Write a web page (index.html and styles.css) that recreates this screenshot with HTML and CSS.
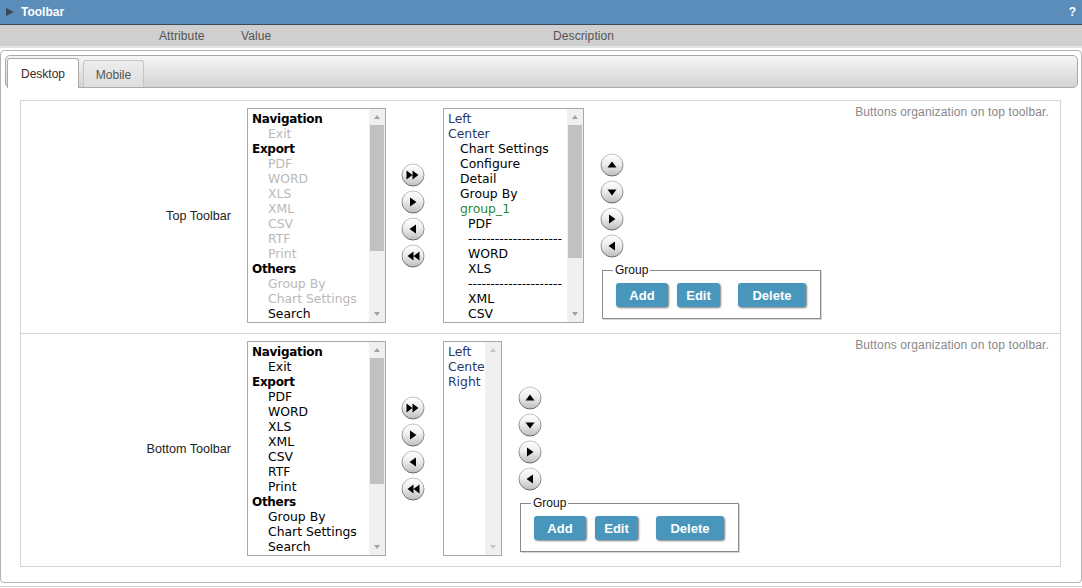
FILE: index.html
```html
<!DOCTYPE html>
<html>
<head>
<meta charset="utf-8">
<link rel="stylesheet" href="styles.css">
</head>
<body>
<svg class="defs" width="0" height="0" aria-hidden="true">
  <defs>
    <linearGradient id="bf" x1="0" y1="0" x2="0" y2="1">
      <stop offset="0" stop-color="#ffffff"/>
      <stop offset="0.45" stop-color="#eeeeee"/>
      <stop offset="1" stop-color="#bdbdbd"/>
    </linearGradient>
    <linearGradient id="bs" x1="0" y1="0" x2="0" y2="1">
      <stop offset="0" stop-color="#c4c4c4"/>
      <stop offset="1" stop-color="#666666"/>
    </linearGradient>
  </defs>
</svg>

<div class="header">
  <span class="caret"></span>
  <span class="title">Toolbar</span>
  <span class="help">?</span>
</div>
<div class="colbar">
  <span class="c-attr">Attribute</span>
  <span class="c-val">Value</span>
  <span class="c-desc">Description</span>
</div>

<div class="panel">
  <div class="tabbar">
    <div class="tab active">Desktop</div>
    <div class="tab">Mobile</div>
  </div>

  <div class="grid">
    <!-- Top toolbar -->
    <div class="row">
      <div class="label">Top Toolbar</div>
      <div class="controls">
        <div class="listbox lb-left">
          <div class="items">
            <div class="grp">Navigation</div>
            <div class="it dis">Exit</div>
            <div class="grp">Export</div>
            <div class="it dis">PDF</div>
            <div class="it dis">WORD</div>
            <div class="it dis">XLS</div>
            <div class="it dis">XML</div>
            <div class="it dis">CSV</div>
            <div class="it dis">RTF</div>
            <div class="it dis">Print</div>
            <div class="grp">Others</div>
            <div class="it dis">Group By</div>
            <div class="it dis">Chart Settings</div>
            <div class="it">Search</div>
          </div>
          <div class="sb"><div class="sb-btn"><span class="tri-up"></span></div><div class="sb-track"><div class="thumb t1"></div></div><div class="sb-btn"><span class="tri-down"></span></div></div>
        </div>

        <div class="arrows">
          <svg class="ab" viewBox="0 0 24 24"><circle cx="12" cy="12" r="11" fill="url(#bf)" stroke="url(#bs)"/><path d="M5.5 7.5l6 4.5-6 4.5zM11.5 7.5l6 4.5-6 4.5z"/></svg>
          <svg class="ab" viewBox="0 0 24 24"><circle cx="12" cy="12" r="11" fill="url(#bf)" stroke="url(#bs)"/><path d="M9 7.5l6.5 4.5-6.5 4.5z"/></svg>
          <svg class="ab" viewBox="0 0 24 24"><circle cx="12" cy="12" r="11" fill="url(#bf)" stroke="url(#bs)"/><path d="M15 7.5l-6.5 4.5 6.5 4.5z"/></svg>
          <svg class="ab" viewBox="0 0 24 24"><circle cx="12" cy="12" r="11" fill="url(#bf)" stroke="url(#bs)"/><path d="M12.5 7.5l-6 4.5 6 4.5zM18.5 7.5l-6 4.5 6 4.5z"/></svg>
        </div>

        <div class="listbox lb-right">
          <div class="items">
            <div class="pos">Left</div>
            <div class="pos">Center</div>
            <div class="l1">Chart Settings</div>
            <div class="l1">Configure</div>
            <div class="l1">Detail</div>
            <div class="l1">Group By</div>
            <div class="l1 green">group_1</div>
            <div class="l2">PDF</div>
            <div class="l2">---------------------</div>
            <div class="l2">WORD</div>
            <div class="l2">XLS</div>
            <div class="l2">---------------------</div>
            <div class="l2">XML</div>
            <div class="l2">CSV</div>
          </div>
          <div class="sb"><div class="sb-btn"><span class="tri-up"></span></div><div class="sb-track"><div class="thumb t2"></div></div><div class="sb-btn"><span class="tri-down"></span></div></div>
        </div>

        <div class="col2">
          <div class="arrows2">
            <svg class="ab" viewBox="0 0 24 24"><circle cx="12" cy="12" r="11" fill="url(#bf)" stroke="url(#bs)"/><path d="M7.5 14.5l4.5-6 4.5 6z"/></svg>
            <svg class="ab" viewBox="0 0 24 24"><circle cx="12" cy="12" r="11" fill="url(#bf)" stroke="url(#bs)"/><path d="M7.5 9.5l4.5 6 4.5-6z"/></svg>
            <svg class="ab" viewBox="0 0 24 24"><circle cx="12" cy="12" r="11" fill="url(#bf)" stroke="url(#bs)"/><path d="M9 7.5l6.5 4.5-6.5 4.5z"/></svg>
            <svg class="ab" viewBox="0 0 24 24"><circle cx="12" cy="12" r="11" fill="url(#bf)" stroke="url(#bs)"/><path d="M15 7.5l-6.5 4.5 6.5 4.5z"/></svg>
          </div>
          <fieldset class="group">
            <legend>Group</legend>
            <button class="btn b-add">Add</button><button class="btn b-edit">Edit</button><button class="btn b-del">Delete</button>
          </fieldset>
        </div>
      </div>
      <div class="desc">Buttons organization on top toolbar.</div>
    </div>

    <!-- Bottom toolbar -->
    <div class="row">
      <div class="label">Bottom Toolbar</div>
      <div class="controls">
        <div class="listbox lb-left">
          <div class="items">
            <div class="grp">Navigation</div>
            <div class="it">Exit</div>
            <div class="grp">Export</div>
            <div class="it">PDF</div>
            <div class="it">WORD</div>
            <div class="it">XLS</div>
            <div class="it">XML</div>
            <div class="it">CSV</div>
            <div class="it">RTF</div>
            <div class="it">Print</div>
            <div class="grp">Others</div>
            <div class="it">Group By</div>
            <div class="it">Chart Settings</div>
            <div class="it">Search</div>
          </div>
          <div class="sb"><div class="sb-btn"><span class="tri-up"></span></div><div class="sb-track"><div class="thumb t1"></div></div><div class="sb-btn"><span class="tri-down"></span></div></div>
        </div>

        <div class="arrows">
          <svg class="ab" viewBox="0 0 24 24"><circle cx="12" cy="12" r="11" fill="url(#bf)" stroke="url(#bs)"/><path d="M5.5 7.5l6 4.5-6 4.5zM11.5 7.5l6 4.5-6 4.5z"/></svg>
          <svg class="ab" viewBox="0 0 24 24"><circle cx="12" cy="12" r="11" fill="url(#bf)" stroke="url(#bs)"/><path d="M9 7.5l6.5 4.5-6.5 4.5z"/></svg>
          <svg class="ab" viewBox="0 0 24 24"><circle cx="12" cy="12" r="11" fill="url(#bf)" stroke="url(#bs)"/><path d="M15 7.5l-6.5 4.5 6.5 4.5z"/></svg>
          <svg class="ab" viewBox="0 0 24 24"><circle cx="12" cy="12" r="11" fill="url(#bf)" stroke="url(#bs)"/><path d="M12.5 7.5l-6 4.5 6 4.5zM18.5 7.5l-6 4.5 6 4.5z"/></svg>
        </div>

        <div class="listbox lb-small">
          <div class="items">
            <div class="pos">Left</div>
            <div class="pos">Center</div>
            <div class="pos">Right</div>
          </div>
          <div class="sb sb-off"><div class="sb-btn"><span class="tri-up"></span></div><div class="sb-track"></div><div class="sb-btn"><span class="tri-down"></span></div></div>
        </div>

        <div class="col2">
          <div class="arrows2">
            <svg class="ab" viewBox="0 0 24 24"><circle cx="12" cy="12" r="11" fill="url(#bf)" stroke="url(#bs)"/><path d="M7.5 14.5l4.5-6 4.5 6z"/></svg>
            <svg class="ab" viewBox="0 0 24 24"><circle cx="12" cy="12" r="11" fill="url(#bf)" stroke="url(#bs)"/><path d="M7.5 9.5l4.5 6 4.5-6z"/></svg>
            <svg class="ab" viewBox="0 0 24 24"><circle cx="12" cy="12" r="11" fill="url(#bf)" stroke="url(#bs)"/><path d="M9 7.5l6.5 4.5-6.5 4.5z"/></svg>
            <svg class="ab" viewBox="0 0 24 24"><circle cx="12" cy="12" r="11" fill="url(#bf)" stroke="url(#bs)"/><path d="M15 7.5l-6.5 4.5 6.5 4.5z"/></svg>
          </div>
          <fieldset class="group">
            <legend>Group</legend>
            <button class="btn b-add">Add</button><button class="btn b-edit">Edit</button><button class="btn b-del">Delete</button>
          </fieldset>
        </div>
      </div>
      <div class="desc">Buttons organization on top toolbar.</div>
    </div>
  </div>
</div>
<div class="next"></div>
</body>
</html>
```

FILE: styles.css
```css
* { box-sizing: border-box; }

html, body {
  margin: 0;
  padding: 0;
}

body {
  width: 1082px;
  height: 588px;
  overflow: hidden;
  background: #fff;
  font-family: "Liberation Sans", Arial, sans-serif;
  font-size: 12px;
  color: #222;
}

.defs { position: absolute; width: 0; height: 0; }

/* header */
.header {
  height: 25px;
  background: #5a8dba;
  border-bottom: 1px solid #3d4b57;
  display: flex;
  align-items: center;
  padding: 0 4px 0 6px;
  color: #fff;
  font-weight: bold;
  font-size: 12px;
}
.caret {
  width: 0;
  height: 0;
  border-left: 8px solid #3a4856;
  border-top: 4.5px solid transparent;
  border-bottom: 4.5px solid transparent;
  margin-right: 7px;
}
.title { flex: 1; }
.help { padding-right: 2px; }

.colbar {
  height: 23px;
  background: #cfcfcf;
  border-bottom: 2px solid #e3e3e3;
  display: flex;
  align-items: center;
  color: #555;
  font-size: 12px;
  letter-spacing: 0.1px;
}
.c-attr { margin-left: 159px; width: 82px; }
.c-val { width: 312px; }

/* panel */
.panel {
  margin-top: 2px;
  border: 1px solid #b3b3b3;
  border-radius: 4px;
  padding: 4px 3px 15px 4px;
}

.tabbar {
  height: 33px;
  border: 1px solid #aaa;
  border-radius: 5px;
  background: linear-gradient(#f6f6f6, #d4d4d4);
  display: flex;
  align-items: flex-end;
  padding-left: 1px;
}
.tab {
  height: 27px;
  width: 61px;
  margin-left: 4px;
  border: 1px solid #c6c6c6;
  border-bottom: 0;
  border-radius: 3px 3px 0 0;
  background: linear-gradient(#ededed, #dedede);
  color: #555;
  display: flex;
  align-items: center;
  justify-content: center;
  padding-top: 1px;
}
.tab.active {
  height: 30px;
  width: 72px;
  margin-left: 0;
  margin-bottom: -1px;
  border-color: #aaa;
  background: #fff;
  color: #3a2a2a;
  padding-top: 0;
}

.grid {
  margin: 12px 17px 0 15px;
  border: 1px solid #d3d3d3;
}
.row {
  height: 232px;
  display: flex;
  align-items: flex-start;
}
.row + .row { border-top: 1px solid #d3d3d3; height: 233px; }

.label {
  width: 210px;
  height: 215px;
  margin-top: 7px;
  margin-right: 16px;
  display: flex;
  align-items: center;
  justify-content: flex-end;
  color: #222;
  font-size: 12.6px;
}

.controls {
  margin-top: 7px;
  height: 215px;
  display: flex;
}

/* list boxes */
.listbox {
  height: 215px;
  border: 1px solid #a8a8a8;
  background: #fff;
  display: flex;
}
.lb-left { width: 139px; }
.lb-right { width: 141px; margin-left: 18px; }
.lb-small { width: 59px; margin-left: 18px; }

.items {
  flex: 1;
  overflow: hidden;
  padding: 2px 0 0 4px;
  font-family: "DejaVu Sans", Verdana, sans-serif;
  font-size: 12.4px;
  line-height: 15px;
  white-space: nowrap;
  color: #000;
}
.grp { font-weight: bold; font-size: 12px; letter-spacing: -0.3px; color: #000; padding-top: 1px; margin-bottom: -1px; }
.it { padding-left: 16px; }
.dis { color: #b9b9b9; }
.pos { color: #2a3a66; }
.l1 { padding-left: 12px; }
.l2 { padding-left: 20px; }
.green { color: #2e8a2e; }

.sb {
  width: 16px;
  background: #f0f0f0;
  display: flex;
  flex-direction: column;
}
.sb-btn {
  height: 16px;
  display: flex;
  align-items: center;
  justify-content: center;
}
.sb-track { flex: 1; }
.thumb {
  margin: 0 1px;
  background: #c1c1c1;
}
.t1 { height: 126px; }
.t2 { height: 133px; }
.tri-up {
  width: 0; height: 0;
  border-left: 3.5px solid transparent;
  border-right: 3.5px solid transparent;
  border-bottom: 4px solid #a3a3a3;
}
.tri-down {
  width: 0; height: 0;
  border-left: 3.5px solid transparent;
  border-right: 3.5px solid transparent;
  border-top: 4px solid #a3a3a3;
}
.sb-off .tri-up { border-bottom-color: #c8c8c8; }
.sb-off .tri-down { border-top-color: #c8c8c8; }

/* arrow buttons */
.arrows {
  margin-left: 15px;
  display: flex;
  flex-direction: column;
  justify-content: center;
  gap: 3px;
}
.ab {
  width: 24px;
  height: 24px;
  display: block;
}
.ab path { fill: #000; }

.col2 {
  margin-left: 16px;
  align-self: flex-end;
  margin-bottom: 4px;
  display: flex;
  flex-direction: column;
}
.arrows2 {
  display: flex;
  flex-direction: column;
  gap: 3px;
}

.group {
  margin: 5px 0 0 2px;
  padding: 6px 0 11px 13px;
  width: 219px;
  border: 1px solid #8a8a8a;
  box-shadow: 1px 1px 0 #d6d6d6;
  display: flex;
  min-width: 0;
}
.group legend {
  padding: 0 2px;
  margin-left: -3px;
  font-size: 12px;
  line-height: 14px;
  color: #111;
}
.btn {
  height: 24px;
  border: 0;
  border-radius: 3px;
  background: #4896bc;
  color: #fff;
  font-family: "Liberation Sans", Arial, sans-serif;
  font-weight: bold;
  font-size: 13px;
  padding: 0;
  box-shadow: 1px 1px 2px rgba(0,0,0,0.5);
}
.b-add { width: 52px; }
.b-edit { width: 43px; margin-left: 9px; }
.b-del { width: 68px; margin-left: 18px; }

.desc {
  margin-left: auto;
  margin-top: 4px;
  padding-right: 11px;
  color: #888;
  font-size: 12px;
  letter-spacing: 0.14px;
}

.next {
  margin-top: 3px;
  border-top: 1px solid #cfcfcf;
}
```
